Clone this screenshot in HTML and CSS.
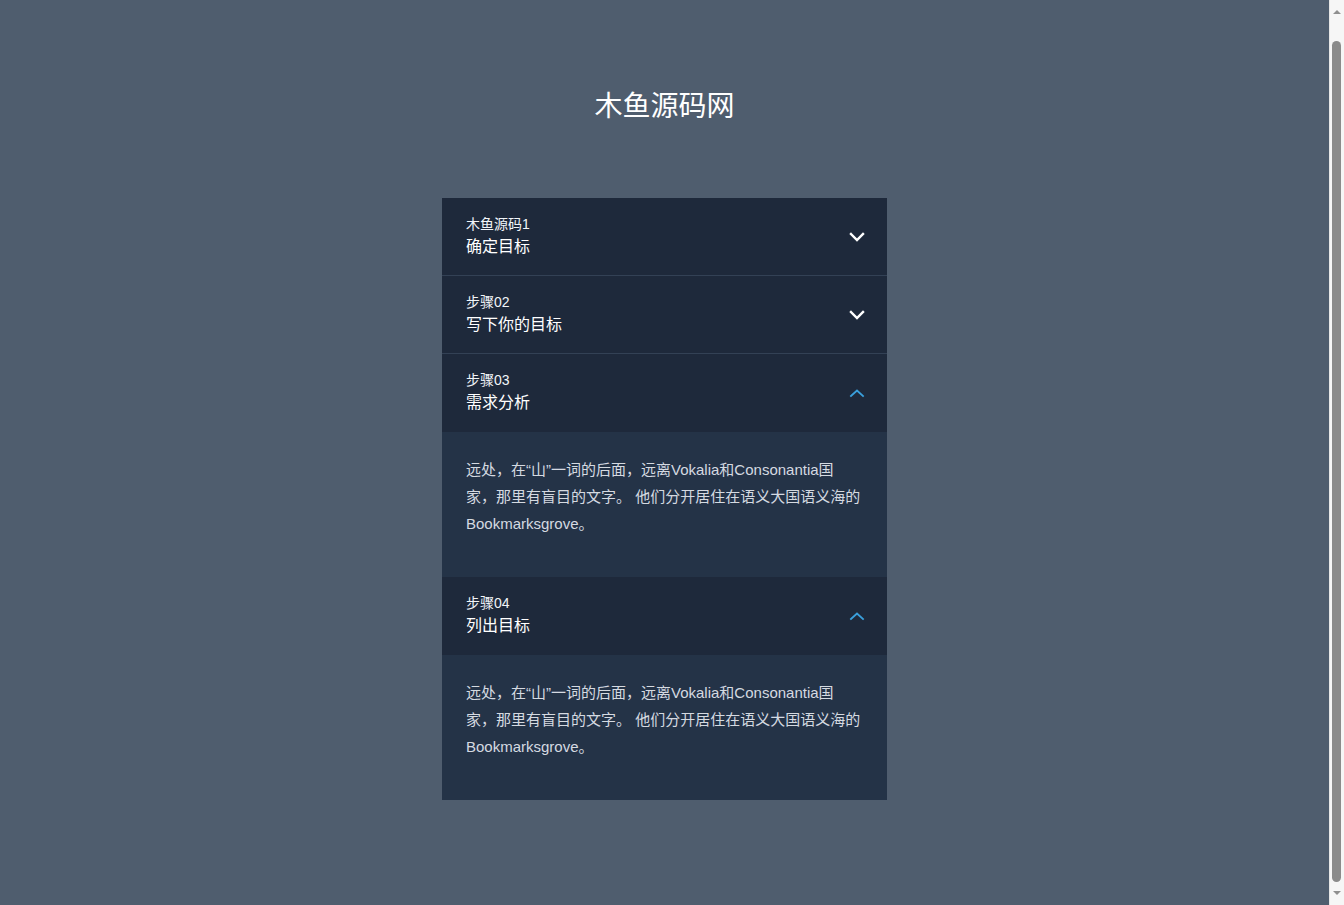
FILE: index.html
```html
<!DOCTYPE html>
<html lang="zh-CN">
<head>
<meta charset="utf-8">
<title>木鱼源码网</title>
<link rel="stylesheet" href="styles.css">
</head>
<body>
<div class="page">
  <h1 class="title">木鱼源码网</h1>
  <div class="accordion">
    <div class="item">
      <div class="head">
        <div class="head-text">
          <div class="label">木鱼源码1</div>
          <div class="name">确定目标</div>
        </div>
        <svg class="chev down" width="16" height="10" viewBox="0 0 16 10"><polyline points="2,2 8,8 14,2" fill="none" stroke="#ffffff" stroke-width="2.4" stroke-linecap="square"/></svg>
      </div>
    </div>
    <div class="item">
      <div class="head">
        <div class="head-text">
          <div class="label">步骤02</div>
          <div class="name">写下你的目标</div>
        </div>
        <svg class="chev down" width="16" height="10" viewBox="0 0 16 10"><polyline points="2,2 8,8 14,2" fill="none" stroke="#ffffff" stroke-width="2.4" stroke-linecap="square"/></svg>
      </div>
    </div>
    <div class="item open">
      <div class="head">
        <div class="head-text">
          <div class="label">步骤03</div>
          <div class="name">需求分析</div>
        </div>
        <svg class="chev up" width="16" height="10" viewBox="0 0 16 10"><polyline points="2,8 8,2.5 14,8" fill="none" stroke="#3a9fdb" stroke-width="1.9" stroke-linecap="square"/></svg>
      </div>
      <div class="body">
        <p>远处，在“山”一词的后面，远离Vokalia和Consonantia国家，那里有盲目的文字。 他们分开居住在语义大国语义海的Bookmarksgrove。</p>
      </div>
    </div>
    <div class="item open">
      <div class="head">
        <div class="head-text">
          <div class="label">步骤04</div>
          <div class="name">列出目标</div>
        </div>
        <svg class="chev up" width="16" height="10" viewBox="0 0 16 10"><polyline points="2,8 8,2.5 14,8" fill="none" stroke="#3a9fdb" stroke-width="1.9" stroke-linecap="square"/></svg>
      </div>
      <div class="body">
        <p>远处，在“山”一词的后面，远离Vokalia和Consonantia国家，那里有盲目的文字。 他们分开居住在语义大国语义海的Bookmarksgrove。</p>
      </div>
    </div>
  </div>
</div>
<div class="scrollbar">
  <div class="arrow-up"></div>
  <div class="thumb"></div>
  <div class="arrow-down"></div>
</div>
</body>
</html>
```
FILE: styles.css
```css
html {
  background: #4f5d6e;
  height: 100%;
  overflow: hidden;
}
body {
  margin: 0;
  height: 100%;
  padding-right: 15px;
  box-sizing: border-box;
  background: #4f5d6e;
  font-family: "Liberation Sans", "Noto Sans CJK SC", sans-serif;
  color: #ffffff;
}
.page {
  display: flex;
  flex-direction: column;
  align-items: center;
  padding-top: 86px;
}
.title {
  margin: 0;
  font-size: 28px;
  line-height: 42px;
  font-weight: normal;
  color: #ffffff;
}
.accordion {
  width: 445px;
  margin-top: 70px;
  display: flex;
  flex-direction: column;
}
.item {
  border-bottom: 1px solid #334155;
}
.item.open {
  border-bottom: none;
}
.head {
  background: #1e293b;
  display: flex;
  align-items: center;
  justify-content: space-between;
  padding: 16px 22px 16px 24px;
}
.item.open .head {
  padding-bottom: 17px;
}
.head-text {
  display: flex;
  flex-direction: column;
}
.label {
  font-size: 14px;
  line-height: 21px;
  color: #f1f5f9;
}
.name {
  font-size: 16px;
  line-height: 24px;
  color: #ffffff;
}
.chev {
  display: block;
}
.body {
  background: #243347;
  padding: 24px 24px 40px 24px;
}
.body p {
  margin: 0;
  font-size: 15px;
  line-height: 27px;
  color: #d5dae1;
}
.scrollbar {
  position: fixed;
  top: 0;
  right: 0;
  width: 15px;
  height: 100vh;
  background: #f6f6f6;
  border-left: 1px solid #e6e6e6;
  box-sizing: border-box;
}
.arrow-up {
  position: absolute;
  top: 10px;
  left: 3px;
  width: 0;
  height: 0;
  border-left: 4px solid transparent;
  border-right: 4px solid transparent;
  border-bottom: 4px solid #8f8f8f;
}
.arrow-down {
  position: absolute;
  bottom: 10px;
  left: 3px;
  width: 0;
  height: 0;
  border-left: 4px solid transparent;
  border-right: 4px solid transparent;
  border-top: 4px solid #8f8f8f;
}
.thumb {
  position: absolute;
  top: 41px;
  bottom: 23px;
  left: 2px;
  width: 9px;
  border-radius: 5px;
  background: #8b8b8b;
}
```
